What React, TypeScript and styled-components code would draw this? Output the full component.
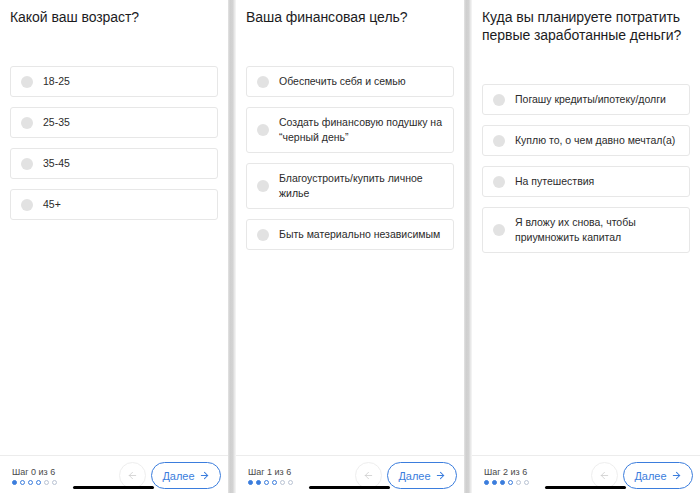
import { Fragment } from 'react'
import styled, { createGlobalStyle } from 'styled-components'
import { ArrowLeft, ArrowRight } from 'lucide-react'

const Color = {
  TEXT: '#1c1c1e',
  OPTION_TEXT: '#2b2b2b',
  BORDER: '#e7e7e7',
  RADIO: '#e2e2e2',
  BLUE: '#3b7ddd',
  MUTED: '#4a4a4a',
}

type Step = {
  title: string
  options: string[]
  current: number
}

const steps: Step[] = [
  {
    title: 'Какой ваш возраст?',
    options: ['18-25', '25-35', '35-45', '45+'],
    current: 0,
  },
  {
    title: 'Ваша финансовая цель?',
    options: [
      'Обеспечить себя и семью',
      'Создать финансовую подушку на “черный день”',
      'Благоустроить/купить личное жилье',
      'Быть материально независимым',
    ],
    current: 1,
  },
  {
    title: 'Куда вы планируете потратить первые заработанные деньги?',
    options: [
      'Погашу кредиты/ипотеку/долги',
      'Куплю то, о чем давно мечтал(а)',
      'На путешествия',
      'Я вложу их снова, чтобы приумножить капитал',
    ],
    current: 2,
  },
]

const TOTAL = 6

const GlobalStyle = createGlobalStyle`
  html, body {
    margin: 0;
    padding: 0;
    background: #ffffff;
  }
  body {
    font-family: 'Liberation Sans', Arial, sans-serif;
    -webkit-font-smoothing: antialiased;
  }
`

const Screen = ({ title, options, current }: Step) => (
  <Phone>
    <Title>{title}</Title>
    <OptionList>
      {options.map((option) => (
        <Option key={option}>
          <Radio />
          <OptionText>{option}</OptionText>
        </Option>
      ))}
    </OptionList>
    <Footer>
      <Progress>
        <StepLabel>
          Шаг {current} из {TOTAL}
        </StepLabel>
        <Dots>
          {Array.from({ length: TOTAL }).map((_, i) => (
            <Dot key={i} $filled={i <= current} $faded={i >= 4} />
          ))}
        </Dots>
      </Progress>
      <Buttons>
        <BackButton>
          <ArrowLeft size={11} strokeWidth={1.6} />
        </BackButton>
        <NextButton>
          Далее
          <ArrowRight size={11} strokeWidth={2.2} />
        </NextButton>
      </Buttons>
      <HomeBar />
    </Footer>
  </Phone>
)

export default function App() {
  return (
    <>
      <GlobalStyle />
      <Page>
        {steps.map((step, i) => (
          <Fragment key={step.title}>
            {i > 0 && <Divider />}
            <Screen {...step} />
          </Fragment>
        ))}
      </Page>
    </>
  )
}

const Page = styled.div`
  display: flex;
  width: 700px;
  height: 493px;
  overflow: hidden;
`

const Divider = styled.div`
  width: 8px;
  flex-shrink: 0;
  background: linear-gradient(
    to right,
    #e4e4e4 0%,
    #cfcfcf 25%,
    #d3d3d3 60%,
    #ececec 85%,
    #f6f6f6 100%
  );
`

const Phone = styled.div`
  position: relative;
  width: 228px;
  flex-shrink: 0;
  height: 493px;
  display: flex;
  flex-direction: column;
  padding-top: 8px;
  box-sizing: border-box;
  background: #ffffff;
`

const Title = styled.h2`
  margin: 0 10px;
  font-size: 14px;
  line-height: 18px;
  font-weight: 400;
  letter-spacing: -0.05px;
  color: ${Color.TEXT};
`

const OptionList = styled.div`
  margin: 40px 10px 0;
  display: flex;
  flex-direction: column;
  gap: 10px;
`

const Option = styled.div`
  display: flex;
  align-items: center;
  gap: 10px;
  padding: 7px 8px 7px 10px;
  border: 1px solid ${Color.BORDER};
  border-radius: 3px;
`

const Radio = styled.span`
  width: 12px;
  height: 12px;
  border-radius: 50%;
  background: ${Color.RADIO};
  flex-shrink: 0;
`

const OptionText = styled.span`
  font-size: 10.5px;
  line-height: 15px;
  color: ${Color.OPTION_TEXT};
`

const Footer = styled.div`
  margin-top: auto;
  height: 37px;
  border-top: 1px solid #ececec;
  display: flex;
  align-items: center;
  padding: 0 7px 0 12px;
`

const Progress = styled.div`
  display: flex;
  flex-direction: column;
  gap: 3px;
  margin-top: 3px;
`

const StepLabel = styled.span`
  font-size: 9px;
  line-height: 10px;
  color: ${Color.MUTED};
`

const Dots = styled.div`
  display: flex;
  gap: 3px;
`

const Dot = styled.span<{ $filled: boolean; $faded: boolean }>`
  width: 5px;
  height: 5px;
  box-sizing: border-box;
  border-radius: 50%;
  border: 1px solid ${({ $faded }) => ($faded ? '#b9c3d3' : Color.BLUE)};
  background: ${({ $filled }) => ($filled ? Color.BLUE : 'transparent')};
`

const Buttons = styled.div`
  margin-left: auto;
  display: flex;
  align-items: center;
  gap: 5px;
  margin-top: 2px;
`

const BackButton = styled.button`
  width: 27px;
  height: 27px;
  padding: 0;
  border-radius: 50%;
  border: 1px solid #eeeeee;
  background: #ffffff;
  color: #c8c8c8;
  display: flex;
  align-items: center;
  justify-content: center;
`

const NextButton = styled.button`
  width: 70px;
  height: 27px;
  padding: 0;
  border-radius: 14px;
  border: 1px solid ${Color.BLUE};
  background: #ffffff;
  color: ${Color.BLUE};
  font-family: 'Liberation Sans', Arial, sans-serif;
  font-size: 11px;
  display: flex;
  align-items: center;
  justify-content: center;
  gap: 4px;
`

const HomeBar = styled.span`
  position: absolute;
  left: 50%;
  bottom: 4px;
  width: 81px;
  height: 3px;
  margin-left: -41px;
  border-radius: 2px;
  background: #000000;
`
